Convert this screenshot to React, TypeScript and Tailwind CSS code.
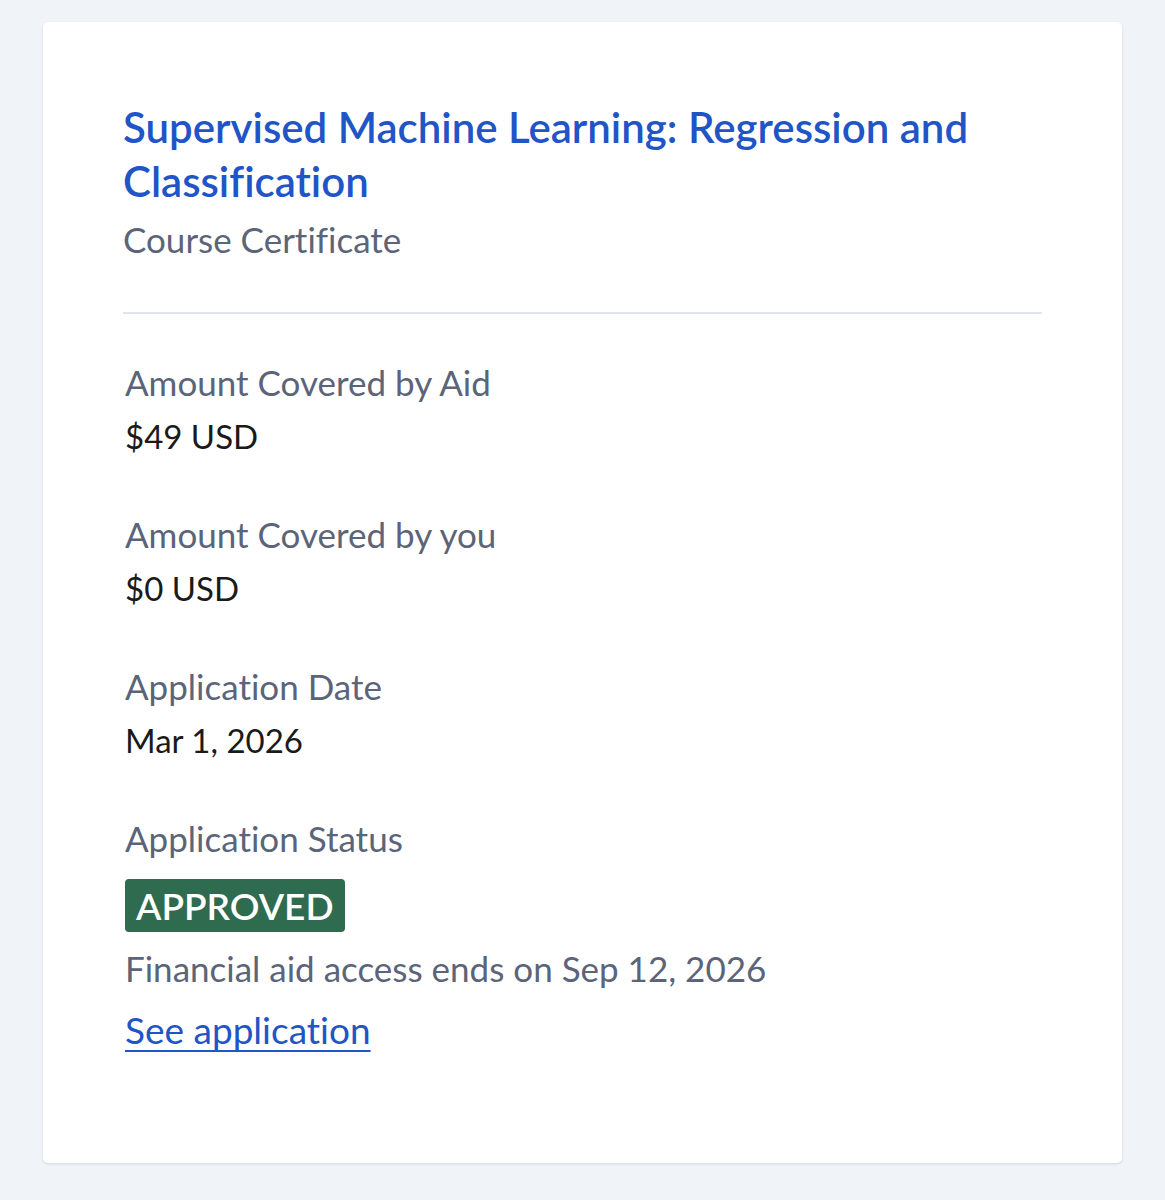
export default function App() {
    const rows = [
        { label: "Amount Covered by Aid", value: "$49 USD" },
        { label: "Amount Covered by you", value: "$0 USD" },
        { label: "Application Date", value: "Mar 1, 2026" },
    ];

    return (
        <div className="min-h-[1200px] w-full bg-[#f0f3f8] pt-[22px] px-[43px] font-['Lato',sans-serif] [font-variant-ligatures:none]">
            {/* Card */}
            <div className="bg-white rounded-[5px] shadow-[0_1px_3px_rgba(0,0,0,0.12)] pt-[78px] pb-[106px] px-[80px]">
                {/* Header */}
                <div className="pb-[46px] border-b-2 border-[#dfe4ee]">
                    <h1 className="text-[42px] leading-[54px] font-semibold text-[#1f55c6]">
                        Supervised Machine Learning: Regression and Classification
                    </h1>
                    <div className="mt-[4px] text-[35px] leading-[54px] text-[#5b6478]">
                        Course Certificate
                    </div>
                </div>

                {/* Details */}
                <div className="pt-[41px] pl-[2px] flex flex-col gap-[44px]">
                    {rows.map((row) => (
                        <div key={row.label}>
                            <div className="text-[35px] leading-[54px] text-[#5b6478]">{row.label}</div>
                            <div className="text-[33px] leading-[54px] text-[#1a1a1a]">{row.value}</div>
                        </div>
                    ))}
                    <div>
                        <div className="text-[35px] leading-[54px] text-[#5b6478]">Application Status</div>
                        <span className="mt-[14px] inline-block bg-[#2e6b4f] text-white rounded-[4px] px-[11px] h-[53px] leading-[53px] text-[37px] font-semibold">
                            APPROVED
                        </span>
                        <div className="mt-[9px] text-[35px] leading-[54px] text-[#5b6478]">
                            Financial aid access ends on Sep 12, 2026
                        </div>
                        <a href="#" className="mt-[8px] block w-fit text-[37px] leading-[54px] text-[#1f55c6] underline underline-offset-[6px] decoration-2">
                            See application
                        </a>
                    </div>
                </div>
            </div>
        </div>
    );
}
